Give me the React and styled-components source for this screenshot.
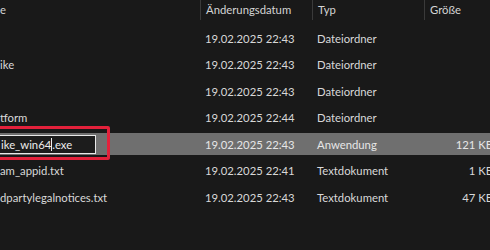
import styled, { createGlobalStyle } from "styled-components";

const GlobalStyle = createGlobalStyle`
  html, body { margin: 0; padding: 0; background: #191919; }
  body { width: 490px; height: 250px; overflow: hidden; }
`;

const files = [
  { name: "", date: "19.02.2025 22:43", type: "Dateiordner", size: "" },
  { name: "ike", date: "19.02.2025 22:43", type: "Dateiordner", size: "" },
  { name: "", date: "19.02.2025 22:43", type: "Dateiordner", size: "" },
  { name: "tform", date: "19.02.2025 22:44", type: "Dateiordner", size: "" },
  { name: "ike_win64.exe", date: "19.02.2025 22:43", type: "Anwendung", size: "121 KB", renaming: true },
  { name: "am_appid.txt", date: "19.02.2025 22:41", type: "Textdokument", size: "1 KB" },
  { name: "dpartylegalnotices.txt", date: "19.02.2025 22:43", type: "Textdokument", size: "47 KB" },
];

const cols = "200px 112px 112px 1fr";

const Pane = styled.div`
  position: relative;
  width: 490px;
  height: 250px;
  background: #191919;
  font-family: "Lato", "Noto Sans", sans-serif;
  font-size: 11.3px;
  color: #dcdcdc;
  overflow: hidden;
`;

const Header = styled.div`
  display: grid;
  grid-template-columns: ${cols};
  height: 20px;
  margin-bottom: 7px;
`;

const HeadCell = styled.div`
  display: flex;
  align-items: center;
  padding-left: ${(p) => (p.$first ? "0" : "5px")};
  border-left: ${(p) => (p.$first ? "none" : "1px solid #3a3a3a")};
  color: #d4d4d4;
  line-height: 16px;
`;

const List = styled.div`
  display: flex;
  flex-direction: column;
  gap: 4.5px;
`;

const Row = styled.div`
  display: grid;
  grid-template-columns: ${cols};
  height: 22px;
  align-items: center;
  background: ${(p) => (p.$selected ? "#6f6f6f" : "transparent")};
  color: ${(p) => (p.$selected ? "#e6e6e6" : "#d8d8d8")};
`;

const Cell = styled.div`
  padding-left: ${(p) => (p.$pad || 0)}px;
  text-align: ${(p) => (p.$right ? "right" : "left")};
  margin-right: ${(p) => (p.$right ? "-3px" : "0")};
  white-space: nowrap;
`;

const RenameBox = styled.div`
  width: 96px;
  height: 19px;
  box-sizing: border-box;
  border: 1px solid #e8e8e8;
  border-left: none;
  background: #1c1c1c;
  color: #ececec;
  display: flex;
  align-items: center;
  padding-left: 1px;
`;

const Caret = styled.span`
  display: inline-block;
  width: 1px;
  height: 13px;
  background: #f0f0f0;
`;

const Highlight = styled.div`
  position: absolute;
  left: -4px;
  top: 126px;
  width: 114px;
  height: 34px;
  box-sizing: border-box;
  border: 3px solid #e3213b;
  border-radius: 2px;
`;

export default function App() {
  return (
    <>
      <GlobalStyle />
      <Pane>
        <Header>
          <HeadCell $first>e</HeadCell>
          <HeadCell>Änderungsdatum</HeadCell>
          <HeadCell>Typ</HeadCell>
          <HeadCell>Größe</HeadCell>
        </Header>
        <List>
          {files.map((f, i) => (
            <Row key={i} $selected={f.renaming}>
              <Cell>
                {f.renaming ? (
                  <RenameBox>
                    ike_win64<Caret />.exe
                  </RenameBox>
                ) : (
                  f.name
                )}
              </Cell>
              <Cell $pad={5}>{f.date}</Cell>
              <Cell $pad={5}>{f.type}</Cell>
              <Cell $right>{f.size}</Cell>
            </Row>
          ))}
        </List>
        <Highlight />
      </Pane>
    </>
  );
}
